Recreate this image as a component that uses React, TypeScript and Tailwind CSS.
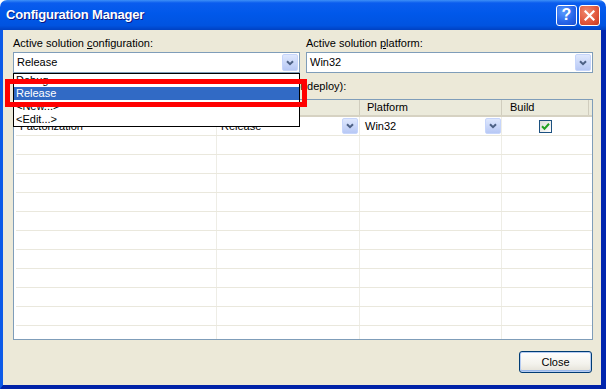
import React from "react";

const Chevron = () => (
  <svg width="8" height="6" viewBox="0 0 8 6">
    <path d="M1 1.2 L4 4.2 L7 1.2" fill="none" stroke="#4D6185" strokeWidth="2" />
  </svg>
);

const DropBtn = ({ cls }: { cls: string }) => (
  <div
    className={
      "flex items-center justify-center rounded-[2px] border border-[#C6D5FB] bg-[linear-gradient(to_bottom,#DFE8FD,#B7C8F5)] " +
      cls
    }
  >
    <Chevron />
  </div>
);

const Row = ({ first }: { first?: boolean }) => (
  <div className="flex h-[19px] shrink-0 border-b border-[#EAE8DD] ml-[2px]">
    <div className="w-[201px] border-r border-[#EEEDE6] flex items-center pl-[4px]">
      {first ? "Factorization" : ""}
    </div>
    <div className="w-[143px] border-r border-[#EEEDE6] flex items-center pl-[4px]">
      {first ? (
        <>
          <span className="flex-1">Release</span>
          <DropBtn cls="w-[16px] h-[16px] mr-[1px]" />
        </>
      ) : null}
    </div>
    <div className="w-[142px] border-r border-[#EEEDE6] flex items-center pl-[5px]">
      {first ? (
        <>
          <span className="flex-1">Win32</span>
          <DropBtn cls="w-[16px] h-[16px] mr-[0px]" />
        </>
      ) : null}
    </div>
    <div className="w-[87px] flex items-center justify-center">
      {first ? (
        <div className="w-[13px] h-[13px] border border-[#1C5180] bg-[linear-gradient(135deg,#DCDCD7,#FFFFFF)] flex items-center justify-center">
          <svg width="9" height="9" viewBox="0 0 9 9">
            <path d="M1 4.2 L3.5 6.7 L8 1.8" stroke="#21A121" strokeWidth="2" fill="none" />
          </svg>
        </div>
      ) : null}
    </div>
  </div>
);

export default function App() {
  return (
    <div className="w-[606px] h-[389px] flex flex-col bg-white font-['Liberation_Sans',Arial,sans-serif] text-[11px] text-black overflow-hidden">
      {/* Title bar */}
      <div className="h-[30px] shrink-0 flex items-center pl-[6px] pr-[6px] rounded-t-[7px] bg-[linear-gradient(to_bottom,#3D8FF7_0%,#0A5CEE_10%,#0058EA_45%,#0053E0_85%,#0041C2_100%)]">
        <div className="flex-1 text-white font-bold text-[13px] tracking-[-0.2px] [text-shadow:1px_1px_0_#0A1883]">
          Configuration Manager
        </div>
        <div className="flex gap-[2px]">
          <div className="w-[21px] h-[21px] rounded-[3px] border border-white bg-[radial-gradient(circle_at_35%_30%,#5A9CFF,#2663E8_60%,#1A4FD0)] flex items-center justify-center text-white font-bold text-[16px] leading-none">
            ?
          </div>
          <div className="w-[21px] h-[21px] rounded-[3px] border border-white bg-[radial-gradient(circle_at_35%_30%,#F08A6E,#E0553A_60%,#C4391F)] flex items-center justify-center">
            <svg width="11" height="11" viewBox="0 0 11 11">
              <path d="M1.5 1.5 L9.5 9.5 M9.5 1.5 L1.5 9.5" stroke="white" strokeWidth="2.2" strokeLinecap="square" />
            </svg>
          </div>
        </div>
      </div>

      {/* Body */}
      <div className="relative flex-1 flex flex-col bg-[#ECE9D8] border-l-[3px] border-l-[#0D5BE8] border-r-[5px] border-r-[#0025AE] border-b-[4px] border-b-[#0022A8] pl-[10px] pr-[8px] pt-[6px]">
        <div className="grid grid-cols-2 gap-[6px]">
          <div className="flex flex-col">
            <div className="h-[14px] leading-[14px]">
              Active solution <span className="underline">c</span>onfiguration:
            </div>
            <div className="mt-[2px] h-[21px] border border-[#7F9DB9] bg-white flex items-center pl-[3px]">
              <span className="flex-1">Release</span>
              <DropBtn cls="w-[16px] h-[17px] mr-[1px]" />
            </div>
          </div>
          <div className="flex flex-col">
            <div className="h-[14px] leading-[14px]">
              Active solution <span className="underline">p</span>latform:
            </div>
            <div className="mt-[2px] h-[21px] border border-[#7F9DB9] bg-white flex items-center pl-[3px]">
              <span className="flex-1">Win32</span>
              <DropBtn cls="w-[16px] h-[17px] mr-[1px]" />
            </div>
          </div>
        </div>

        <div className="mt-[6px] h-[14px] leading-[14px]">
          Project conte<span className="underline">x</span>ts (check the project configurations to build or deploy):
        </div>

        {/* Grid */}
        <div className="mt-[6px] h-[241px] border border-[#7F9DB9] bg-white flex flex-col overflow-hidden">
          <div className="h-[17px] shrink-0 flex bg-[#EBEADB] border-b-[2px] border-[#D6D2C2]">
            <div className="w-[203px] border-r border-[#D0CDBE] flex items-center pl-[6px]">Project</div>
            <div className="w-[143px] border-r border-[#D0CDBE] flex items-center pl-[6px]">Configuration</div>
            <div className="w-[142px] border-r border-[#D0CDBE] flex items-center pl-[7px]">Platform</div>
            <div className="w-[87px] border-r border-[#D0CDBE] flex items-center pl-[8px]">Build</div>
            <div className="flex-1" />
          </div>
          <Row first />
          {Array.from({ length: 11 }).map((_, i) => (
            <Row key={i} />
          ))}
        </div>

        <div className="mt-[11px] flex justify-end pr-[1px]">
          <button className="w-[73px] h-[22px] rounded-[3px] border border-[#003C74] bg-[linear-gradient(to_bottom,#FFFFFF,#F3F2EC_60%,#E3E0D6)] shadow-[inset_0_0_0_1px_#B6CCF2,inset_0_-1px_0_1px_#98B8EA] text-[11px] text-black">
            Close
          </button>
        </div>

        {/* Dropdown list overlay */}
        <div className="absolute left-[10px] top-[43px] w-[287px] border border-black bg-white flex flex-col">
          <div className="h-[13px] leading-[13px] pl-[2px]">Debug</div>
          <div className="h-[13px] leading-[13px] pl-[2px] bg-[#316AC5] text-white">Release</div>
          <div className="h-[13px] leading-[13px] pl-[2px]">&lt;New...&gt;</div>
          <div className="h-[13px] leading-[13px] pl-[2px]">&lt;Edit...&gt;</div>
        </div>

        {/* Red annotation box */}
        <div className="absolute left-[2px] top-[49px] w-[302px] h-[28px] border-[5px] border-[#FF0000]" />
      </div>
    </div>
  );
}
